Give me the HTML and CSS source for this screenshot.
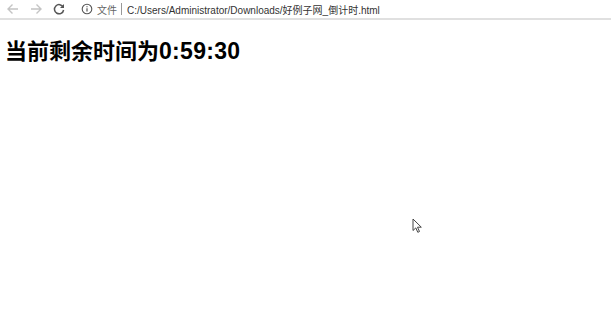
FILE: index.html
```html
<!DOCTYPE html>
<html lang="zh">
<head>
    <meta charset="UTF-8">
    <title>倒计时</title>
    <link rel="stylesheet" href="styles.css">
</head>
<body>
<div class="toolbar">
    <svg class="nav" width="14" height="14" viewBox="0 0 14 14"><path d="M12 7H2M6.5 2.5L2 7l4.5 4.5" fill="none" stroke="#c4c4c4" stroke-width="1.4"/></svg>
    <svg class="nav" width="14" height="14" viewBox="0 0 14 14"><path d="M2 7h10M7.5 2.5L12 7l-4.5 4.5" fill="none" stroke="#c4c4c4" stroke-width="1.4"/></svg>
    <svg class="nav" width="14" height="14" viewBox="0 0 14 14"><path d="M11.2 5.2A4.6 4.6 0 1 0 11.6 8" fill="none" stroke="#555" stroke-width="1.5"/><path d="M12 2v4H8z" fill="#555"/></svg>
    <div class="address">
        <svg width="12" height="12" viewBox="0 0 12 12"><circle cx="6" cy="6" r="4.8" fill="none" stroke="#555" stroke-width="1.1"/><path d="M6 5.2v3.4M6 3.3v1" stroke="#555" stroke-width="1.2"/></svg>
        <span class="scheme">文件</span>
        <span class="sep"></span>
        <span class="url">C:/Users/Administrator/Downloads/好例子网_倒计时.html</span>
    </div>
</div>
<div class="page">
    <h1>当前剩余时间为<span class="time">0:59:30</span></h1>
</div>
<svg class="cursor" width="11" height="16" viewBox="0 0 11 16"><path d="M1 1v11.5l2.8-2.6 2 4.4 1.7-.8-2-4.3h3.8z" fill="#fff" stroke="#444" stroke-width="1"/></svg>
</body>
</html>
```

FILE: styles.css
```css
body {
    margin: 0;
    background: #fff;
    font-family: "Noto Sans CJK SC", "Liberation Sans", sans-serif;
}

.toolbar {
    height: 18px;
    display: flex;
    align-items: center;
    padding-left: 6px;
    border-bottom: 2px solid #e0e0e0;
    font-family: "Liberation Sans", "Noto Sans CJK SC", sans-serif;
    font-size: 11px;
    color: #333;
}

.nav {
    margin-right: 9px;
}

.address {
    display: flex;
    align-items: center;
    margin-left: 6px;
}

.scheme {
    margin-left: 4px;
    color: #666;
    font-size: 10px;
}

.sep {
    width: 1px;
    height: 12px;
    background: #999;
    margin: 0 5px 0 4px;
}

.url {
    font-size: 10px;
}

.page {
    padding: 13px 5px;
}

.page h1 {
    margin: 0;
    font-family: "Liberation Sans", "Noto Sans CJK SC", sans-serif;
    font-size: 22px;
    font-weight: bold;
    color: #000;
}

.time {
    font-size: 23px;
    letter-spacing: 0.3px;
}

/* mouse pointer captured in the shot */
.cursor {
    position: absolute;
    left: 412px;
    top: 218px;
}
```
